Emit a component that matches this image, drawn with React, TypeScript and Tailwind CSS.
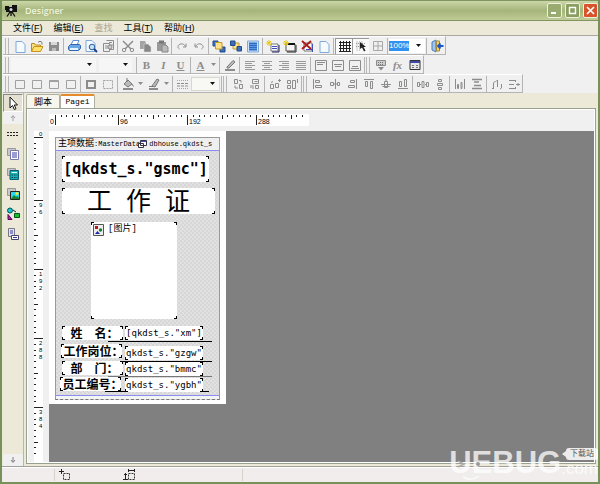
import React from 'react';
import { clsx } from 'clsx';

const G = '#8c8c8c';

const lines = (rows: [number, number][], top = 4, gap = 2) =>
  rows.map(([x, w], i) => <rect key={i} x={x} y={top + i * gap} width={w} height="1" fill="#9a9a9a" />);

// 16x16 glyphs for every tool bar
const ICONS: Record<string, React.ReactNode> = {
  page: <path d="M4 3.500h6l3 3v8H4z" fill="#f4faff" stroke="#7fa9d6" />,
  open: (
    <>
      <path d="M2.500 13.500v-8h3l1 1.500h5v2" fill="#f8e08a" stroke="#b98a1c" />
      <path d="M2.500 13.500l2.500-5h9l-2.500 5z" fill="#ffe26a" stroke="#c8921c" />
      <path d="M9 4.500c1-1.500 3-1.500 4 0v2" fill="none" stroke="#777" />
    </>
  ),
  save: (
    <>
      <path d="M3 4h10v9H3z" fill={G} />
      <path d="M5 4h6v3H5z" fill="#d8d8d8" />
      <path d="M6 10h4v3H6z" fill="#bbb" />
    </>
  ),
  print: (
    <>
      <path d="M5 7l2-4.500h6l-2 4.500z" fill="#fff" stroke="#5b8fd0" />
      <path d="M2.500 8.500l2-2h9l1 1v3l-2 2h-9l-1-1z" fill="#6aa5e4" stroke="#2f67ad" />
      <path d="M4 11h8" stroke="#e6f2ff" strokeWidth="2" />
    </>
  ),
  preview: (
    <>
      <path d="M3 2.500h6l3 3v8H3z" fill="#f4faff" stroke="#7fa9d6" />
      <circle cx="9" cy="9" r="2.800" fill="#bfe0f8" stroke="#2c5c9c" />
      <path d="M11 11l3 3" stroke="#1b3f8a" strokeWidth="2" />
    </>
  ),
  findText: (
    <>
      <path d="M3.500 5.500h6v8h-6zM6.500 2.500h7v9h-4" fill="none" stroke={G} />
      <path d="M5 8h3M5 10h4M9 4.500h3M10 7h3" stroke={G} />
      <circle cx="10" cy="9" r="2" fill="#ccc" stroke={G} />
    </>
  ),
  cut: (
    <>
      <path d="M3 3l8 8M13 3l-8 8" stroke={G} strokeWidth="1.500" />
      <circle cx="4" cy="12" r="1.700" fill="none" stroke={G} />
      <circle cx="12" cy="12" r="1.700" fill="none" stroke={G} />
    </>
  ),
  copy: (
    <>
      <path d="M3 3h5l1 2v6H3z" fill="#a4a4a4" />
      <path d="M7 6h4l3 3v5H7z" fill="#888" stroke="#ddd" strokeWidth=".5" />
    </>
  ),
  paste: (
    <>
      <path d="M3 4h9v9H3z" fill="#9a9a9a" />
      <path d="M5 2.500h5v3H5z" fill="#777" />
      <path d="M8 7h4l2 2v5H8z" fill="#bbb" stroke="#858585" />
    </>
  ),
  redo: <path d="M4 9V5.500M4 9h3M4.500 8.500c2-4 7-3 7.500 0 .2 1-.5 2-1.500 2.500" fill="none" stroke={G} />,
  undo: <path d="M12 9V5.500M12 9H9M11.500 8.500c-2-4-7-3-7.500 0-.2 1 .5 2 1.500 2.500" fill="none" stroke={G} />,
  front: (
    <>
      <path d="M2 3h5v5H2zM9 9h5v5H9z" fill="#3a6fb8" stroke="#234b8c" />
      <path d="M4.500 4.500h6.500v6.500H4.500z" fill="#ffe28a" stroke="#c59a2a" />
    </>
  ),
  back: (
    <>
      <path d="M5 5h6v6H5z" fill="#ffe28a" stroke="#c59a2a" />
      <path d="M2.500 3h4.500v4.500H2.500zM9 8.500h4.500V13H9z" fill="#3a6fb8" stroke="#234b8c" />
    </>
  ),
  selectAll: (
    <>
      <path d="M2.500 3h11v11h-11z" fill="#cfe4fa" stroke="#7fa9d6" />
      <path d="M4 4.500h8v8H4z" fill="#2f6cc4" />
      <path d="M4 6.500h8M4 8.500h8M4 10.500h8" stroke="#5c96e0" />
    </>
  ),
  newBand: (
    <>
      <path d="M6 6h7v7H6z" fill="#fff" stroke="#777" />
      <path d="M7 8.500h5M7 10.500h5" stroke="#3c50b8" />
      <path d="M14 7v7H7" fill="none" stroke="#1a2060" />
      <path d="M4 2v6M1 5h6M2 3l4 4M6 3L2 7" stroke="#e5c81a" />
    </>
  ),
  newForm: (
    <>
      <path d="M4 6h9v7H4z" fill="#f4f4f4" stroke="#555" />
      <path d="M6 6h7" stroke="#111" strokeWidth="2" />
      <path d="M14 7v7H5" fill="none" stroke="#222" />
      <path d="M4 2v6M1 5h6M2 3l4 4M6 3L2 7" stroke="#e5c81a" />
    </>
  ),
  remove: (
    <>
      <path d="M5 5h8v8H5z" fill="#fff" stroke="#777" />
      <path d="M7 11.500h6M13.500 6v8" stroke="#3c50b8" />
      <path d="M3 3l9 8M12 3l-9 8" stroke="#b01818" strokeWidth="1.800" />
    </>
  ),
  grid: (
    <path d="M4.500 3v11M7.500 3v11M10.500 3v11M13.500 3v11M3 4.500h12M3 7.500h12M3 10.500h12M3 13.500h12" stroke="#222" />
  ),
  snap: (
    <>
      <path d="M4 3.500v10M6.500 3.500v10M9 3.500v5M3 5.500h9M3 8.500h9" stroke="#999" strokeDasharray="1 1" />
      <path d="M7 4v7l2-1.500 2 4 1.500-1-2-3.500h2.500z" fill="#222" />
    </>
  ),
  fit: <path d="M3.500 3.500h9v9h-9zM8 3.500v9M3.500 8h9" fill="none" stroke="#a8a8a8" />,
  exit: (
    <>
      <path d="M3 4l4-2v12l-4-2z" fill="#9fc3ea" stroke="#4b7cb8" />
      <path d="M7.500 3h3v10h-3z" fill="#f2d36a" stroke="#a58a3a" />
      <path d="M14.500 8H9M11.500 5.500L9 8l2.500 2.500" fill="none" stroke="#1c55c4" strokeWidth="1.800" />
    </>
  ),
  highlight: (
    <>
      <path d="M5 10l6-6.500 2 1.500-6 6H5z" fill="#bbb" stroke="#777" />
      <path d="M3 13h10" stroke={G} strokeWidth="2" />
    </>
  ),
  alignL: lines([[3, 10], [3, 7], [3, 10], [3, 7], [3, 10]]),
  alignC: lines([[3, 10], [5, 6], [3, 10], [5, 6], [3, 10]]),
  alignR: lines([[3, 10], [6, 7], [3, 10], [6, 7], [3, 10]]),
  alignJ: lines([[3, 10], [3, 10], [3, 10], [3, 10], [3, 10]]),
  vTop: <path d="M2.500 3.500h11v10h-11zM4 5.500h8M4 7.500h6" fill="none" stroke={G} />,
  vMid: <path d="M2.500 3.500h11v10h-11zM4 7.500h8M5 9.500h6" fill="none" stroke={G} />,
  vBot: <path d="M2.500 3.500h11v10h-11zM4 11.500h8M5 9.500h6" fill="none" stroke={G} />,
  stamp: (
    <>
      <path d="M3.500 3.500h9v5h-9z" fill="#ccc" stroke={G} />
      <path d="M5 5.500h6M5 7.500h6" stroke="#777" strokeDasharray="1 1" />
      <path d="M5 10h6l-3 3.500z" fill={G} />
    </>
  ),
  form: (
    <>
      <path d="M3 3.500h10v9H3z" fill="#e8e8e8" stroke="#333" />
      <path d="M3 5h10" stroke="#4048a8" strokeWidth="2" />
      <path d="M5 8.500h2M9 8.500h2M5 10.500h2M9 10.500h2" stroke="#777" />
    </>
  ),
  box: <path d="M3.500 4.500h9v8h-9z" fill="none" stroke="#a0a0a0" />,
  boxTop: <path d="M3.500 4.500h9v8h-9zM3.500 5.500h9" fill="none" stroke="#a0a0a0" />,
  boxAll: <path d="M4 5h8v7H4z" fill="none" stroke={G} strokeWidth="2" />,
  boxNone: <path d="M3.500 4.500h9v8h-9z" fill="none" stroke="#a0a0a0" strokeDasharray="2 1" />,
  bucket: (
    <>
      <path d="M4 8l4-4 4 4-4 3zM7 2v4" fill="#bbb" stroke="#777" />
      <path d="M12 8l1.500 2.500" stroke="#777" />
      <path d="M3 13h10" stroke={G} strokeWidth="2" />
    </>
  ),
  pen: (
    <>
      <path d="M6 10l5-7 2 1-4 7zM3 10.500h4" fill="#bbb" stroke="#777" />
      <path d="M3 13h9" stroke={G} strokeWidth="2" />
    </>
  ),
  dashes: (
    <>
      <path d="M2 4.500h12M2 12.500h12" stroke="#a8a8a8" strokeDasharray="1 1" />
      <path d="M2 7.500h12M2 10h12" stroke={G} strokeDasharray="3 1" />
    </>
  ),
  order1: <path d="M4.500 3.500h3v4h-3zM9.500 8.500h3v4h-3zM5 9.500v2.500h3M9 4.500h2v2" fill="none" stroke={G} />,
  order2: <path d="M5.500 3.500h6v4h-6zM8.500 9.500h3v3h-3zM4 9v3M6 9v4M7.500 5.500h3" fill="none" stroke={G} />,
  order3: <path d="M3.500 8.500h3v4h-3zM8.500 7.500h3v4h-3zM4 6.500l2-1M11 4.500h3M12.500 3v3" fill="none" stroke={G} />,
  order4: <path d="M3.500 4.500h3v3h-3zM3.500 9.500h3v3h-3zM8.500 4.500h3v8h-3zM13.500 3v4" fill="none" stroke={G} />,
  alLeft: <path d="M3.500 3v10M5.500 4.500h4v2h-4zM5.500 9.500h6v2h-6z" fill="none" stroke={G} />,
  alHc: <path d="M8.500 3v10M3.500 6.500h3v3h-3zM10.500 6.500h2v3h-2zM6 8h5" fill="none" stroke={G} />,
  alRight: <path d="M12.500 3v10M6.500 4.500h4v2h-4zM4.500 9.500h6v2h-6z" fill="none" stroke={G} />,
  alTop: <path d="M3 3.500h10M4.500 5.500h2v5h-2zM9.500 5.500h2v7h-2z" fill="none" stroke={G} />,
  alVc: <path d="M3 8.500h10M8 3v3M6.500 5.500h3v6h-3zM4.500 10.500h7" fill="none" stroke={G} />,
  alBottom: <path d="M3 12.500h10M4.500 5.500h2v5h-2zM9.500 3.500h2v7h-2z" fill="none" stroke={G} />,
  spH: <path d="M2.500 6.500h2v4h-2zM7 5.500h2v6H7zM11.500 6.500h2v4h-2zM5 8.500h1M10 8.500h1" fill="none" stroke={G} />,
  spV: <path d="M6.500 3.500h3v2h-3zM5.500 7.500h5v2h-5zM6.500 11.500h3v2h-3z" fill="none" stroke={G} />,
  sameW: <path d="M3.500 3v10M12.500 3v10M5.500 8.500h1v4h-1zM9 6.500h1v6H9z" fill="none" stroke={G} />,
  sameH: <path d="M3 3.500h10M3 12.500h10M5 6h5M5 9.500h7" fill="none" stroke={G} strokeWidth="1.500" />,
  growW: <path d="M4.500 12V7l2-2M8.500 11V4l-1.500 1.500M12.500 8v4l-1.500 1M3 12.500h2" fill="none" stroke={G} />,
  growH: <path d="M3 4.500h6M3 8.500h5M3 12.500h6M14 8.500h-4M12 7v3M9.500 4v2M9.500 11v2" fill="none" stroke={G} />,
  pointer: <path d="M5 2v11l2.500-2.500 1.800 4 1.700-.8-1.800-3.700H12.500z" fill="#fff" stroke="#111" />,
  band: <path d="M2 6.500h12M2 9.500h12" stroke="#222" strokeDasharray="2 1" fill="none" />,
  memo: (
    <>
      <path d="M2.500 2.500h8v7h-8z" fill="#c8c8c8" stroke="#999" />
      <path d="M5.500 4.500h8v9h-8z" fill="#fff" stroke="#7878b0" />
      <path d="M7 7h5M7 9h5M7 11h5" stroke="#3838a8" />
    </>
  ),
  calc: (
    <>
      <path d="M2.500 2.500h8v7h-8z" fill="#c8c8c8" stroke="#999" />
      <path d="M5 4.500h8.500v9H5z" fill="#18b4b8" stroke="#0c5c70" />
      <path d="M6.500 6.500h5.500" stroke="#d8ffff" />
      <path d="M6.500 9h6M6.500 11.500h6" stroke="#073c48" strokeDasharray="1.500 1" />
    </>
  ),
  image: (
    <>
      <path d="M2.500 2.500h8v7h-8z" fill="#c8c8c8" stroke="#999" />
      <path d="M5.500 5.500h9v8h-9z" fill="#28d8f0" stroke="#222" />
      <path d="M6 13l3-4 2 2 2-1 1 3z" fill="#188028" />
      <circle cx="12" cy="7.500" r="1.500" fill="#ffe820" />
    </>
  ),
  shapes: (
    <>
      <circle cx="5" cy="4.500" r="2.500" fill="#18c8d0" stroke="#055" />
      <path d="M3 8.500l4 5H3z" fill="#c020b0" stroke="#505" />
      <path d="M9.500 7.500h5v4h-5z" fill="#18c028" stroke="#052" />
      <path d="M8 4l3 2" stroke="#222" />
    </>
  ),
  subreport: (
    <>
      <path d="M3.500 2.500h6v8h-6z" fill="#e4e4ec" stroke="#778" />
      <path d="M6.500 9.500h7v4h-7z" fill="#fff" stroke="#446" />
      <path d="M5 5h3M5 7h3M8 11.500h4" stroke="#3838a8" />
    </>
  ),
  up: <path d="M8 11V6M6 8l2-2.500L10 8" fill="none" stroke="#a0a0a0" />,
  down: <path d="M8 5v5M6 8l2 2.500L10 8" fill="none" stroke="#808080" />,
};

function Icon({ name }: { name: string }) {
  return (
    <svg viewBox="0 0 16 16" className="size-4 shrink-0" aria-hidden="true">
      {ICONS[name]}
    </svg>
  );
}

function Tool({ name, pressed, children }: { name: string; pressed?: boolean; children?: React.ReactNode }) {
  return (
    <button
      aria-label={name}
      className={clsx(
        'flex h-4 w-[17px] shrink-0 items-center justify-center font-["Liberation_Serif",serif] text-[11px] font-bold leading-4 text-[#8c8c8c]',
        pressed && 'border-l border-t border-[#999] bg-[#fafafa]',
      )}
    >
      {children ?? <Icon name={name} />}
    </button>
  );
}

const Tools = ({ names }: { names: string[] }) => names.map((n, i) => <Tool key={i} name={n} />);

const Sep = () => <span className="mx-px h-4 w-px shrink-0 bg-[#b4b4b4]" />;

const Grip = () => (
  <span className="mr-0.5 h-4 w-1 shrink-0 border-x border-[#b8b8b8]" />
);

function Arrow({ label }: { label: string }) {
  return (
    <button aria-label={label} className="flex h-4 w-[9px] shrink-0 items-center justify-center">
      <svg viewBox="0 0 5 3" className="h-[3px] w-[5px]"><path d="M0 0h5L2.500 3z" fill={G} /></svg>
    </button>
  );
}

function Combo({ label, value, className }: { label: string; value?: string; className: string }) {
  return (
    <label className={clsx('relative flex h-3.5 shrink-0 items-center', className)}>
      <select
        aria-label={label}
        className="h-full w-full appearance-none bg-transparent font-['Liberation_Sans',sans-serif] text-[9px] leading-[14px] outline-none"
      >
        <option>{value}</option>
      </select>
      <svg viewBox="0 0 5 3" className="pointer-events-none absolute right-1 h-[3px] w-[5px]">
        <path d="M0 0h5L2.500 3z" fill="#111" />
      </svg>
    </label>
  );
}

function Bar({ children }: { children: React.ReactNode }) {
  return (
    <div className="flex h-[19px] items-center self-start border-b border-r border-[#b4b4b4] border-t border-t-white pl-0.5">
      {children}
    </div>
  );
}

function HRuler() {
  const ticks = Array.from({ length: 44 }, (_, i) => i + 1);
  return (
    <svg viewBox="0 0 260 12" className="ml-[21px] h-3 w-[260px] shrink-0 bg-white">
      {ticks.map((k) => (
        <rect key={k} x={Math.round(k * 5.75)} y="1" width="1" height={k === 1 || k % 12 === 0 ? 10 : k % 6 === 0 ? 4 : 2} fill="#222" />
      ))}
      {['0', '96', '192', '288'].map((t, i) => (
        <text key={t} x={i === 0 ? 1 : i * 69 + 2} y="10" className="font-['Liberation_Sans',sans-serif] text-[7px]">{t}</text>
      ))}
    </svg>
  );
}

function VRuler() {
  const ticks = Array.from({ length: 56 }, (_, i) => i + 1);
  return (
    <svg viewBox="0 0 9 333" className="h-[333px] w-[9px] shrink-0 bg-white">
      {ticks.map((k) => (
        <rect key={k} x="0" y={Math.round(k * 5.75)} width={k === 1 || k % 12 === 0 ? 9 : k % 6 === 0 ? 4 : 2} height="1" fill="#222" />
      ))}
      {['0', '96', '192', '288', '384'].map((t, i) =>
        t.split('').map((c, j) => (
          <text key={t + j} x="5" y={(i === 0 ? -1 : i * 69 + 1) + 6 + j * 7} className="font-['Liberation_Sans',sans-serif] text-[6px]">{c}</text>
        )),
      )}
    </svg>
  );
}

function Item({ className, children }: { className: string; children?: React.ReactNode }) {
  return (
    <div className={clsx('absolute flex items-center justify-center whitespace-pre bg-white', className)}>
      {children}
      <i className="absolute left-0 top-0 size-[3px] border-l border-t border-black" />
      <i className="absolute right-0 top-0 size-[3px] border-r border-t border-black" />
      <i className="absolute bottom-0 left-0 size-[3px] border-b border-l border-black" />
      <i className="absolute bottom-0 right-0 size-[3px] border-b border-r border-black" />
    </div>
  );
}

const ROWS = [
  { label: '姓　名：', field: '[qkdst_s."xm"]', pos: 'left-[13px] top-[195px]', fpos: 'left-[76px] top-[195px]', line: 'left-[59px] top-[210px] bg-black' },
  { label: '工作岗位：', field: 'qkdst_s."gzgw"', pos: 'left-[12px] top-[213px]', fpos: 'left-[76px] top-[215px]', line: 'left-[59px] top-[230px] bg-black' },
  { label: '部　门：', field: 'qkdst_s."bmmc"', pos: 'left-[13px] top-[230px]', fpos: 'left-[76px] top-[231px]', line: 'left-[59px] top-[245px] bg-[#777]' },
  { label: '员工编号：', field: 'qkdst_s."ygbh"', pos: 'left-[11px] top-[246px]', fpos: 'left-[76px] top-[247px]', line: 'left-[56px] top-[260px] bg-black' },
];

function ReportPage() {
  return (
    <div className="relative flex h-[273px] w-[177px] flex-col bg-white p-1.5 pb-1 font-['Liberation_Mono','Noto_Sans_CJK_SC',monospace] text-black">
      <div className="flex flex-1 flex-col border border-[#999] border-b-[#777] [border-bottom-style:dashed] bg-[repeating-conic-gradient(#d7d7d7_0_25%,#e1e1e1_0_50%)] bg-[length:4px_4px]">
        <div className="flex h-[13px] items-center gap-0.5 whitespace-nowrap border-b border-[#8c8cf0] bg-[#efefef] pl-0.5 text-[7px] leading-3">
          <span><span className="text-[9px]">主项数据</span>:MasterData</span>
          <svg viewBox="0 0 9 8" className="-ml-1 h-2 w-[9px] shrink-0">
            <path d="M2.500.5h6v5h-6zM.5 3.500h5v4h-5z" fill="#fff" stroke="#334" />
            <path d="M3 1.500h5" stroke="#4050c0" />
          </svg>
          <span>dbhouse.qkdst_s</span>
        </div>
        <div className="mt-auto h-1 border-t border-[#8c8cf0] bg-[#f4f4f4]" />
      </div>

      <Item className="left-[13px] top-[25px] h-[26px] w-[147px] font-['DejaVu_Sans_Mono',monospace] text-[15px] font-bold">[qkdst_s."gsmc"]</Item>
      <Item className="left-[13px] top-[57px] h-[26px] w-[153px] gap-3.5 pb-1 font-['Noto_Sans_CJK_SC',sans-serif] text-[25px] leading-[26px]">
        <span>工</span><span>作</span><span>证</span>
      </Item>
      <Item className="left-[42px] top-[91px] h-[97px] w-[86px]">
        <div className="mr-auto flex gap-1 self-start pl-0.5 pt-0.5 text-[9px] leading-[11px]">
          <svg viewBox="0 0 11 12" className="h-3 w-[11px]">
            <path d="M.5.5h10v11H.5z" fill="#eee" stroke="#555" />
            <path d="M2 2h3v3H2z" fill="#c01818" />
            <circle cx="7.500" cy="6" r="1.700" fill="#188028" />
            <path d="M2 10l2.500-3L7 10z" fill="#1828b0" />
          </svg>
          [图片]
        </div>
      </Item>
      {ROWS.map((r) => (
        <React.Fragment key={r.label}>
          <div className={clsx('absolute h-px w-[104px]', r.line)} />
          <Item className={clsx('h-3.5 w-[61px] pl-1 font-["Noto_Sans_CJK_SC",sans-serif] text-[12px] font-bold leading-[14px]', r.pos)}>
            {r.label}
          </Item>
          <Item className={clsx('h-3.5 w-[78px] font-["DejaVu_Sans_Mono",monospace] text-[9px] leading-[14px]', r.fpos)}>{r.field}</Item>
        </React.Fragment>
      ))}
    </div>
  );
}

const MENU = [
  { text: '文件', key: 'F' },
  { text: '编辑', key: 'E' },
  { text: '查找' },
  { text: '工具', key: 'T' },
  { text: '帮助', key: 'H' },
];

const WIN_BUTTON = 'flex size-[15px] items-center justify-center rounded-[2px] border border-[#eef2dc]';

export default function App() {
  return (
    <div className="relative flex h-screen flex-col overflow-hidden border-x-2 border-b-2 border-[#77915a] bg-[#ece9d8] font-['Liberation_Sans','Noto_Sans_CJK_SC',sans-serif] text-black">
      <header className="flex h-[21px] shrink-0 items-center gap-2 border-b border-t border-[#7f9660] bg-linear-to-b from-[#cbd7a8] via-[#a5b57c] to-[#c0cc95] pl-[3px]">
        <svg viewBox="0 0 12 12" className="size-3" aria-hidden="true">
          <path d="M0 1h4v1h3V0h5v7H1V5H0z" fill="#111" />
          <circle cx="6" cy="4.500" r="1.500" fill="#ddd" />
          <path d="M5 7L2 11.500M7 7l3 4.500M6 7v4" stroke="#111" strokeWidth="1.300" />
        </svg>
        <h1 className="flex-1 font-['Open_Sans',sans-serif] text-[9px] font-semibold text-[#eef3da]">Designer</h1>
        <div className="flex gap-[3px]">
          <button aria-label="Minimize" className={clsx(WIN_BUTTON, 'bg-[#9aab72]')}>
            <svg viewBox="0 0 11 11" className="size-[11px]"><path d="M2 8h5" stroke="#fff" strokeWidth="2" /></svg>
          </button>
          <button aria-label="Maximize" className={clsx(WIN_BUTTON, 'bg-[#8a9e62]')}>
            <svg viewBox="0 0 11 11" className="size-[11px]"><path d="M2 2.500h7M2.500 2v6.500h6V2" fill="none" stroke="#fff" strokeWidth="1.400" /></svg>
          </button>
          <button aria-label="Close" className={clsx(WIN_BUTTON, 'bg-[#d8532c]')}>
            <svg viewBox="0 0 11 11" className="size-[11px]"><path d="M2 2l7 7M9 2L2 9" stroke="#fff" strokeWidth="1.700" /></svg>
          </button>
        </div>
      </header>

      <nav className="flex h-3.5 shrink-0 items-center gap-[11px] pl-[11px] text-[9px] leading-[14px]">
        {MENU.map((m) => (
          <button key={m.text} className={m.key ? 'text-black' : 'text-[#a8a595]'}>
            {m.text}
            {m.key && <>(<u>{m.key}</u>)</>}
          </button>
        ))}
      </nav>

      <div className="flex shrink-0 flex-col border-t border-[#a8a8a0] bg-[#f0f0f0] pl-px">
        <Bar>
          <Grip />
          <Tools names={['page', 'open', 'save']} />
          <Sep />
          <Tools names={['print', 'preview', 'findText']} />
          <Sep />
          <Tools names={['cut', 'copy', 'paste']} />
          <Sep />
          <Tools names={['undo', 'redo']} />
          <Sep />
          <Tools names={['front', 'back', 'selectAll']} />
          <Sep />
          <Tools names={['newBand', 'newForm', 'remove', 'page']} />
          <Sep />
          <Tool name="grid" pressed />
          <Tool name="snap" pressed />
          <Tool name="fit" />
          <Sep />
          <label className="relative flex h-3.5 w-9 shrink-0 items-center bg-white">
            <select aria-label="Zoom" className="h-2.5 w-5 appearance-none bg-[#3390f0] text-[8px] leading-[10px] text-white outline-none">
              <option>100%</option>
            </select>
            <svg viewBox="0 0 5 3" className="pointer-events-none absolute right-1 h-[3px] w-[5px]">
              <path d="M0 0h5L2.500 3z" fill="#111" />
            </svg>
          </label>
          <Sep />
          <Tool name="exit" />
        </Bar>
        <Bar>
          <Grip />
          <Combo label="Font" className="w-[85px] bg-[#f6f6f6]" />
          <Combo label="Size" className="mx-[3px] w-[33px] bg-[#f6f6f6]" />
          <Sep />
          <Tool name="Bold">B</Tool>
          <Tool name="Italic"><i>I</i></Tool>
          <Tool name="Underline"><u>U</u></Tool>
          <Sep />
          <Tool name="Font color"><u>A</u></Tool>
          <Arrow label="Font color menu" />
          <Sep />
          <Tool name="highlight" />
          <Sep />
          <Tools names={['alignL', 'alignC', 'alignR', 'alignJ']} />
          <Sep />
          <Tools names={['vTop', 'vMid', 'vBot']} />
          <Sep />
          <Grip />
          <Tool name="stamp" />
          <Tool name="Function"><i>fx</i></Tool>
          <Tool name="form" />
        </Bar>
        <Bar>
          <Grip />
          <Tools names={['box', 'box', 'boxTop', 'box']} />
          <Sep />
          <Tools names={['boxAll', 'boxNone']} />
          <Sep />
          <Tool name="bucket" />
          <Arrow label="Fill menu" />
          <Tool name="pen" />
          <Arrow label="Line menu" />
          <Sep />
          <Tool name="dashes" />
          <Combo label="Width" className="w-[29px] border border-[#d8d8cc] bg-[#f8f8f4]" />
          <Sep />
          <Grip />
          <Tools names={['order1', 'order2']} />
          <Sep />
          <Tools names={['order3', 'order4']} />
          <Sep />
          <Grip />
          <Tools names={['alLeft', 'alHc', 'alRight', 'alTop', 'alVc', 'alBottom']} />
          <Sep />
          <Tools names={['spH', 'spV']} />
          <Sep />
          <Tools names={['sameW', 'sameH']} />
          <Sep />
          <Tools names={['growW', 'growH']} />
        </Bar>
      </div>

      <div className="flex min-h-0 flex-1">
        <aside className="flex w-[22px] shrink-0 flex-col items-center border-r border-[#b8b8a8] pl-px pt-px">
          <button aria-label="Select" className="flex h-[18px] w-5 items-center justify-center border border-[#888] border-b-white border-r-white bg-[#e4e1d2]">
            <Icon name="pointer" />
          </button>
          <button aria-label="Scroll up" className="flex h-3 w-5 items-center justify-center bg-[#f0f0f0]"><Icon name="up" /></button>
          {['band', 'memo', 'calc', 'image', 'shapes', 'subreport'].map((n) => (
            <button key={n} aria-label={n} className="flex h-5 w-5 items-center justify-center"><Icon name={n} /></button>
          ))}
          <button aria-label="Scroll down" className="mt-auto flex h-3 w-5 items-center justify-center bg-[#f0f0f0]"><Icon name="down" /></button>
        </aside>

        <div className="flex min-w-0 flex-1 flex-col px-0.5 pb-0.5">
          <div role="tablist" className="flex h-[15px] shrink-0 items-end text-[9px] leading-3">
            <button role="tab" aria-selected="false" className="h-3.5 w-[34px] rounded-t-[2px] border border-b-0 border-[#b0b0a0] bg-[#f6f5ee]">脚本</button>
            <button role="tab" aria-selected="true" className="h-3.5 w-[35px] rounded-t-[2px] border-x border-t-2 border-x-[#b0b0a0] border-t-[#e68b2c] bg-white font-['Liberation_Mono',monospace] text-[8px] leading-3">Page1</button>
          </div>
          <main className="flex min-h-0 flex-1 flex-col border border-[#98a090] bg-[#f0f0f0] px-px outline-1 -outline-offset-2 outline-white">
            <div className="flex h-[22px] shrink-0 items-center"><HRuler /></div>
            <div className="flex min-h-0 flex-1 overflow-hidden pl-1.5">
              <VRuler />
              <div className="ml-1.5 flex-1 bg-[#808080]">
                <ReportPage />
              </div>
            </div>
          </main>
        </div>
      </div>

      <footer className="flex h-4 shrink-0 items-center border-t border-[#a0a098] bg-[#f0edec] shadow-[inset_0_1px_white]">
        <span className="h-3 w-[53px] border-r border-[#d4d4cc]" />
        <svg viewBox="0 0 12 12" className="ml-1 size-3" aria-hidden="true">
          <path d="M0 2.500h5M2.500 0v5" stroke="#222" />
          <path d="M4.500 4.500h6v6h-6z" fill="none" stroke="#333" strokeDasharray="2 1" />
        </svg>
        <svg viewBox="0 0 12 12" className="ml-[52px] size-3" aria-hidden="true">
          <path d="M5 1.500h7M5.500 0v3M11.500 0v3M2.500 4v7M1 5.500h3M0 10.500h5" stroke="#222" />
          <path d="M5.500 4.500h6v6h-6z" fill="none" stroke="#333" strokeDasharray="2 1" />
        </svg>
        <span className="ml-[107px] h-3 border-r border-[#d4d4cc]" />
      </footer>

      <div className="pointer-events-none absolute bottom-1 right-0 flex items-end text-white/75">
        <span className="relative text-[31px] font-bold leading-[30px]">
          UEBUG
          <svg viewBox="0 0 30 30" className="absolute left-2 top-1 size-[30px]">
            <path d="M1 9l6 3-6 3" fill="none" stroke="#aaa" strokeWidth="1.500" />
            <circle cx="21" cy="12" r="2" fill="#999" />
            <path d="M6 25q8 5 16-1" fill="none" stroke="currentColor" strokeWidth="1.500" />
          </svg>
        </span>
        <span className="flex flex-col items-end">
          <span className="flex items-center">
            <svg viewBox="0 0 4 6" className="h-1.5 w-1"><path d="M4 0v6L0 3z" fill="#fff" fillOpacity=".85" /></svg>
            <span className="rounded-[3px] bg-white/85 px-1 text-[8px] leading-3 text-[#555]">下载站</span>
          </span>
          <span className="text-[17px] leading-[18px]">.com</span>
        </span>
      </div>
    </div>
  );
}
